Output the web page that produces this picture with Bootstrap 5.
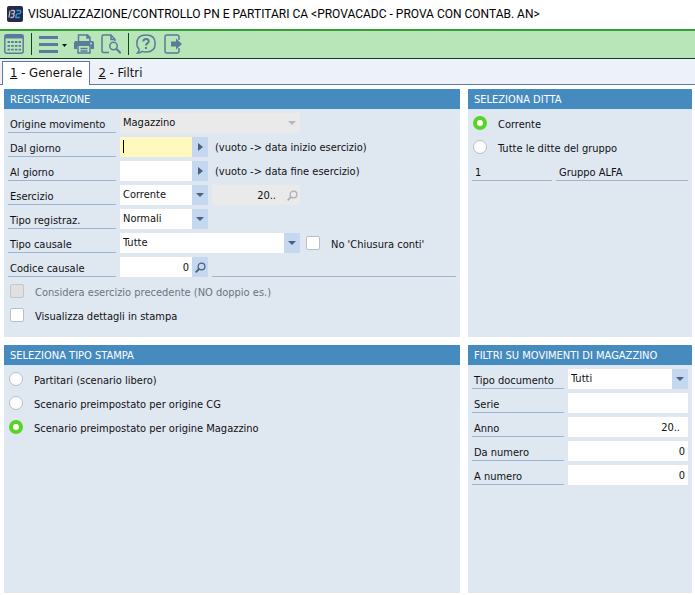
<!DOCTYPE html>
<html lang="it">
<head>
<meta charset="utf-8">
<meta name="viewport" content="width=device-width, initial-scale=1">
<title>Visualizzazione/Controllo PN e partitari CA</title>
<link href="https://cdn.jsdelivr.net/npm/bootstrap@5.3.0/dist/css/bootstrap.min.css" rel="stylesheet">
<script src="https://cdn.jsdelivr.net/npm/bootstrap@5.3.0/dist/js/bootstrap.bundle.min.js" defer></script>
<style>
body{font-family:"DejaVu Sans Condensed","DejaVu Sans",sans-serif;font-size:11px;line-height:16px;color:#111;background:#fff}
.title-bar{height:29px;padding:0 7px 2px;gap:5px}
.title-bar h1{font-family:Roboto,sans-serif;font-size:12px;line-height:16px;font-weight:400;color:#000}
.tool-bar{height:30px;padding:0 4px 2px;gap:7px;background:#b9e6b9;border-top:2px solid #35a035;border-bottom:1px solid #123d1c}
.tool{border:0;background:none;padding:0;color:#5b7b9b;display:flex;align-items:center}
.tool svg{display:block}
.tool-sep{width:1px;height:22px;background:#0b4d16}
.app-tabs{--bs-nav-tabs-border-width:1px;height:26px;padding:2px 2px 0;background:#edf1f9;border-bottom:1px solid #66789a}
.app-tabs .nav-link{font-size:13px;line-height:22px;height:24px;padding:0 7px;border-radius:0;color:#111;border:1px solid transparent;border-bottom:0;margin:0}
.app-tabs .nav-link.active{background:#fff;color:#111;border-color:#66789a}
.work-area{padding:4px 3px 2px 4px}
.pane-row{gap:8px}
.pane-top{min-height:248px}
.side-pane{flex:0 0 224px;min-width:0}
.pane{background:#dfe7f1}
.pane h2{margin:0;height:20px;padding:0 6px;font-size:11px;line-height:22px;font-weight:400;color:#fff;background:#468bc0}
.pane-body{padding:3px 4px 12px;border-top:1px solid #d3e9fa;gap:4px}
.line{height:20px;gap:4px}
.caption,.readout{height:20px;padding:4px 2px 0;border-bottom:1px solid #9db4d4;line-height:15px;white-space:nowrap}
.caption{width:108px;flex:none}
.side-pane .caption{width:92px}
.readout{padding-left:3px;border-color:#a3b4cf}
.code-out{width:80px}
.field{height:20px;border:0;border-radius:0;background-color:#fff;color:#111;font-size:11px;line-height:16px;padding:1px 3px;min-width:0;outline:0}
.field:disabled{background-color:#eaeaea;color:#111;opacity:1}
.grow-field{flex:1 1 0}
.num{text-align:right}
.w-date{width:72px}
.w-short{width:88px}
.w-long{width:180px}
.drop{appearance:none;padding-right:18px;background-repeat:no-repeat;background-position:right 4px center,right center;background-size:8px 4px,16px 20px;
 background-image:url("data:image/svg+xml,%3Csvg xmlns='http://www.w3.org/2000/svg' viewBox='0 0 8 4'%3E%3Cpath fill='%23496080' d='M0 0h8L4 4z'/%3E%3C/svg%3E"),linear-gradient(#c5d8f0,#c5d8f0)}
.drop:disabled{background-size:8px 4px;background-position:right 4px center;
 background-image:url("data:image/svg+xml,%3Csvg xmlns='http://www.w3.org/2000/svg' viewBox='0 0 8 4'%3E%3Cpath fill='%23b4b8be' d='M0 0h8L4 4z'/%3E%3C/svg%3E")}
.current{background:linear-gradient(#000,#000) 3px 3px/1px 13px no-repeat #fff9bd}
.side-btn{width:16px;height:20px;padding:0;border:0;background:#c5d8f0;color:#496080;display:flex;align-items:center;justify-content:center}
.side-btn:disabled{background:#eaeaea;color:#abb0b8}
.note{padding:3px 0 0 3px;white-space:nowrap}
.choice{gap:11px;padding-left:1px}
.choice label{padding-top:3px;white-space:nowrap}
.tick,.dot{appearance:none;flex:none;width:14px;height:14px;margin:0;background:#fff;border:1px solid #b9bec7}
.tick{border-radius:2px;margin-left:1px}
.tick:disabled{background:#e0e0e0;border-color:#c4c6ca}
.tick:disabled+label{color:#6c7480}
.dot{border-radius:50%}
.dot:checked{border:4px solid #58d326}
</style>
</head>
<body class="d-flex flex-column min-vh-100">
<header>
  <div class="title-bar d-flex align-items-center">
    <svg width="16" height="16" viewBox="0 0 16 16" aria-hidden="true"><rect width="16" height="16" rx="2" fill="#252a4a"/><g fill="none" stroke-width="1.300"><path stroke="#b8bdd0" d="M3 4.500 2 11.500M4.200 4.500h2.300q1.300 0 1 1.600-.2 1.500-1.500 1.700 1.300.2 1 1.800-.3 1.900-1.800 1.900H3.400M4.500 7.800h2"/><path stroke="#2f9be0" d="M9.500 4.500h3.200q1.400 0 1.100 1.600-.3 1.600-1.700 1.700h-1.500q-1.300 0-1.500 1.600l-.3 2.100h4"/></g></svg>
    <h1 class="m-0 text-nowrap">VISUALIZZAZIONE/CONTROLLO PN E PARTITARI CA &lt;PROVACADC - PROVA CON CONTAB. AN&gt;</h1>
  </div>
  <div class="tool-bar d-flex align-items-center" role="toolbar" aria-label="Comandi">
    <button class="tool" type="button" aria-label="Calendario"><svg width="20" height="20" viewBox="0 0 20 20"><rect x=".8" y=".8" width="18.400" height="18.400" rx="2" fill="none" stroke="currentColor" stroke-width="1.500"/><path fill="currentColor" d="M1 1h18v3.500H1z"/><path stroke="currentColor" stroke-width="1.800" stroke-dasharray="2.500 1.200" d="M3.500 8H17M3.500 11.800H17M3.500 15.600H17"/></svg></button>
    <span class="tool-sep"></span>
    <button class="tool" type="button" aria-label="Menu"><svg width="28" height="20" viewBox="0 0 28 20"><path stroke="currentColor" stroke-width="3" d="M0 3.500h19M0 10.500h19M0 17.500h19"/><path fill="#111" d="M23 10h5l-2.500 3z"/></svg></button>
    <button class="tool" type="button" aria-label="Stampa"><svg width="20" height="20" viewBox="0 0 20 20"><path fill="none" stroke="currentColor" stroke-width="1.500" d="M4.500 7V1h9l2.500 2.500V7M13 1v3h3"/><path fill="currentColor" d="M2 7h16q2 0 2 2v6h-3v-3H3v3H0V9q0-2 2-2z"/><circle cx="17" cy="9.500" r="1" fill="#b9e6b9"/><path fill="none" stroke="currentColor" stroke-width="1.500" d="M4 12v7h12v-7M6.500 14.500h7M6.500 17h7"/></svg></button>
    <button class="tool" type="button" aria-label="Anteprima"><svg width="20" height="20" viewBox="0 0 20 20"><path fill="none" stroke="currentColor" stroke-width="1.500" d="M8 18.500H2.500q-1.500 0-1.500-1.500V2.500Q1 1 2.500 1H10l4 4.500V7M10 1v4.500h4"/><circle cx="12.500" cy="12" r="3.700" fill="none" stroke="currentColor" stroke-width="1.500"/><path stroke="currentColor" stroke-width="2" d="m15.200 14.700 4.500 4.500"/></svg></button>
    <span class="tool-sep"></span>
    <button class="tool" type="button" aria-label="Aiuto"><svg width="20" height="20" viewBox="0 0 20 20"><path fill="none" stroke="currentColor" stroke-width="1.500" d="M3 15.300Q.8 12.800.8 9.700.8 1 10 1t9.200 8.500Q19.200 18 10 18q-2.200 0-3.800-.6Q4 19.200 1.500 19q1.800-1.500 1.500-3.700z"/><path fill="none" stroke="currentColor" stroke-width="2" d="M7.300 7.500q0-2.500 2.700-2.500t2.700 2.300q0 1.300-1.400 2.100-1.300.8-1.300 2.100M10 13v2"/></svg></button>
    <button class="tool" type="button" aria-label="Esci"><svg width="20" height="20" viewBox="0 0 20 20"><path fill="none" stroke="currentColor" stroke-width="1.500" d="M16 6V3q0-2-2-2H4Q2 1 2 3v14q0 2 2 2h10q2 0 2-2v-3"/><path fill="currentColor" d="M8 7.500h5V4.500l6 5.500-6 5.500v-3H8z"/></svg></button>
  </div>
  <ul class="nav nav-tabs app-tabs flex-nowrap">
    <li class="nav-item"><a class="nav-link active" aria-current="page" href="#generale"><u>1</u> - Generale</a></li>
    <li class="nav-item"><a class="nav-link" href="#filtri"><u>2</u> - Filtri</a></li>
  </ul>
</header>

<main class="work-area d-flex flex-column flex-grow-1 pane-row" id="generale">
  <div class="d-flex pane-row pane-top">
    <section class="pane flex-grow-1">
      <h2>REGISTRAZIONE</h2>
      <div class="pane-body d-flex flex-column">
        <div class="line d-flex"><label class="caption" for="origine">Origine movimento</label><select class="field drop w-long" id="origine" disabled><option>Magazzino</option></select></div>
        <div class="line d-flex"><label class="caption" for="dal">Dal giorno</label><div class="d-flex"><input class="field w-date current" id="dal" type="text"><button class="side-btn" type="button" aria-label="Scegli data iniziale"><svg width="5" height="8" viewBox="0 0 5 8"><path fill="currentColor" d="M0 0v8l5-4z"/></svg></button></div><span class="note">(vuoto -&gt; data inizio esercizio)</span></div>
        <div class="line d-flex"><label class="caption" for="al">Al giorno</label><div class="d-flex"><input class="field w-date" id="al" type="text"><button class="side-btn" type="button" aria-label="Scegli data finale"><svg width="5" height="8" viewBox="0 0 5 8"><path fill="currentColor" d="M0 0v8l5-4z"/></svg></button></div><span class="note">(vuoto -&gt; data fine esercizio)</span></div>
        <div class="line d-flex"><label class="caption" for="esercizio">Esercizio</label><select class="field drop w-short" id="esercizio"><option>Corrente</option></select><div class="d-flex"><input class="field w-date num pe-2" type="text" value="20.." aria-label="Anno esercizio" disabled><button class="side-btn" type="button" aria-label="Cerca esercizio" disabled><svg width="11" height="11" viewBox="0 0 11 11"><g fill="none" stroke="currentColor"><circle cx="6.500" cy="4.500" r="3.400" stroke-width="1.300"/><path stroke-width="1.800" d="m4 7-3.300 3.300"/></g></svg></button></div></div>
        <div class="line d-flex"><label class="caption" for="registraz">Tipo registraz.</label><select class="field drop w-short" id="registraz"><option>Normali</option></select></div>
        <div class="line d-flex"><label class="caption" for="causale">Tipo causale</label><select class="field drop w-long" id="causale"><option>Tutte</option></select><div class="choice d-flex align-items-center"><input class="tick" type="checkbox" id="chiusura"><label for="chiusura">No 'Chiusura conti'</label></div></div>
        <div class="line d-flex"><label class="caption" for="codice">Codice causale</label><div class="d-flex"><input class="field w-date num" id="codice" type="text" value="0"><button class="side-btn" type="button" aria-label="Cerca causale"><svg width="11" height="11" viewBox="0 0 11 11"><g fill="none" stroke="currentColor"><circle cx="6.500" cy="4.500" r="3.400" stroke-width="1.300"/><path stroke-width="1.800" d="m4 7-3.300 3.300"/></g></svg></button></div><span class="readout flex-grow-1"></span></div>
        <div class="line choice d-flex align-items-center"><input class="tick" type="checkbox" id="precedente" disabled><label for="precedente">Considera esercizio precedente (NO doppio es.)</label></div>
        <div class="line choice d-flex align-items-center"><input class="tick" type="checkbox" id="dettagli"><label for="dettagli">Visualizza dettagli in stampa</label></div>
      </div>
    </section>
    <section class="pane side-pane">
      <h2>SELEZIONA DITTA</h2>
      <div class="pane-body d-flex flex-column">
        <div class="line choice d-flex align-items-center"><input class="dot" type="radio" name="ditta" id="corrente" checked><label for="corrente">Corrente</label></div>
        <div class="line choice d-flex align-items-center"><input class="dot" type="radio" name="ditta" id="tutte"><label for="tutte">Tutte le ditte del gruppo</label></div>
        <div class="line d-flex"><span class="readout code-out">1</span><span class="readout flex-grow-1">Gruppo ALFA</span></div>
      </div>
    </section>
  </div>
  <div class="d-flex pane-row flex-grow-1">
    <section class="pane flex-grow-1">
      <h2>SELEZIONA TIPO STAMPA</h2>
      <div class="pane-body d-flex flex-column">
        <div class="line choice d-flex align-items-center"><input class="dot" type="radio" name="stampa" id="partitari"><label for="partitari">Partitari (scenario libero)</label></div>
        <div class="line choice d-flex align-items-center"><input class="dot" type="radio" name="stampa" id="cg"><label for="cg">Scenario preimpostato per origine CG</label></div>
        <div class="line choice d-flex align-items-center"><input class="dot" type="radio" name="stampa" id="mag" checked><label for="mag">Scenario preimpostato per origine Magazzino</label></div>
      </div>
    </section>
    <section class="pane side-pane">
      <h2>FILTRI SU MOVIMENTI DI MAGAZZINO</h2>
      <div class="pane-body d-flex flex-column">
        <div class="line d-flex"><label class="caption" for="documento">Tipo documento</label><select class="field drop grow-field" id="documento"><option>Tutti</option></select></div>
        <div class="line d-flex"><label class="caption" for="serie">Serie</label><input class="field grow-field" id="serie" type="text"></div>
        <div class="line d-flex"><label class="caption" for="anno">Anno</label><input class="field grow-field num pe-2" id="anno" type="text" value="20.."></div>
        <div class="line d-flex"><label class="caption" for="danum">Da numero</label><input class="field grow-field num" id="danum" type="text" value="0"></div>
        <div class="line d-flex"><label class="caption" for="anum">A numero</label><input class="field grow-field num" id="anum" type="text" value="0"></div>
      </div>
    </section>
  </div>
</main>
</body>
</html>
